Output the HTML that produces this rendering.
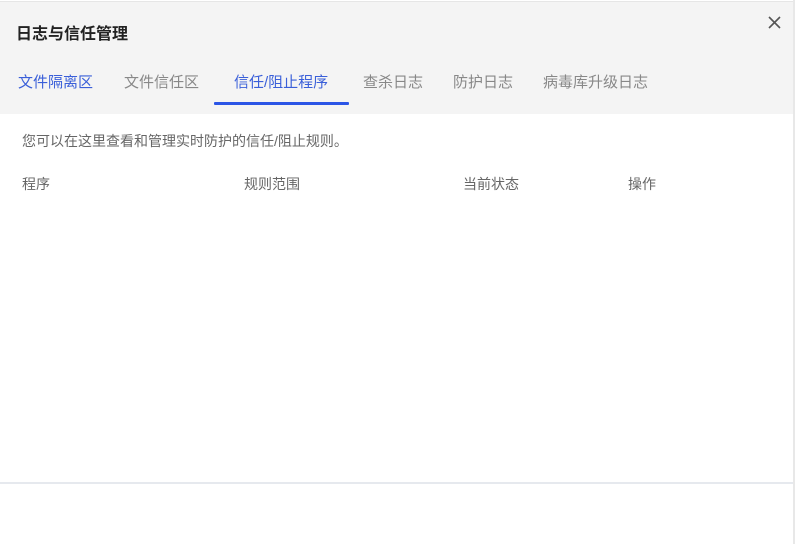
<!DOCTYPE html>
<html><head><meta charset="utf-8"><style>
html,body{margin:0;padding:0;width:795px;height:544px;overflow:hidden;background:#fff;font-family:"Liberation Sans","Noto Sans CJK SC",sans-serif;}
.hdr{position:absolute;left:0;top:1px;width:793px;height:112px;background:#f4f4f4;border-top:1px solid #e6e6e6;}
.rb{position:absolute;left:793px;top:0;width:2px;height:544px;background:#e8e8e8;}
.t{position:absolute;white-space:nowrap;}
.title{left:16px;top:20px;font-size:16px;font-weight:bold;color:#222;}
.tab{top:71px;font-size:15px;color:#888;}
.ul{position:absolute;left:214px;top:102px;width:135px;height:3px;background:#2b55e6;border-radius:1px;}
.line{position:absolute;left:0;top:482px;width:793px;height:2px;background:#e6e9ee;}
</style></head><body>
<div class="hdr"></div>
<div class="rb"></div>
<div class="t title">日志与信任管理</div>
<svg style="position:absolute;left:768px;top:16px" width="13" height="13" viewBox="0 0 13 13"><path d="M1 1L12 12M12 1L1 12" stroke="#555" stroke-width="1.6"/></svg>
<div class="t tab" style="left:18px;color:#3a5fd9">文件隔离区</div>
<div class="t tab" style="left:124px">文件信任区</div>
<div class="t tab" style="left:234px;color:#3a5fd9">信任/阻止程序</div>
<div class="t tab" style="left:363px">查杀日志</div>
<div class="t tab" style="left:453px">防护日志</div>
<div class="t tab" style="left:543px">病毒库升级日志</div>
<div class="ul"></div>
<div class="t" style="left:22px;top:131px;font-size:14px;color:#666">您可以在这里查看和管理实时防护的信任/阻止规则。</div>
<div class="t" style="left:22px;top:174px;font-size:14px;color:#666">程序</div>
<div class="t" style="left:244px;top:174px;font-size:14px;color:#666">规则范围</div>
<div class="t" style="left:463px;top:174px;font-size:14px;color:#666">当前状态</div>
<div class="t" style="left:628px;top:174px;font-size:14px;color:#666">操作</div>
<div class="line"></div>
</body></html>
